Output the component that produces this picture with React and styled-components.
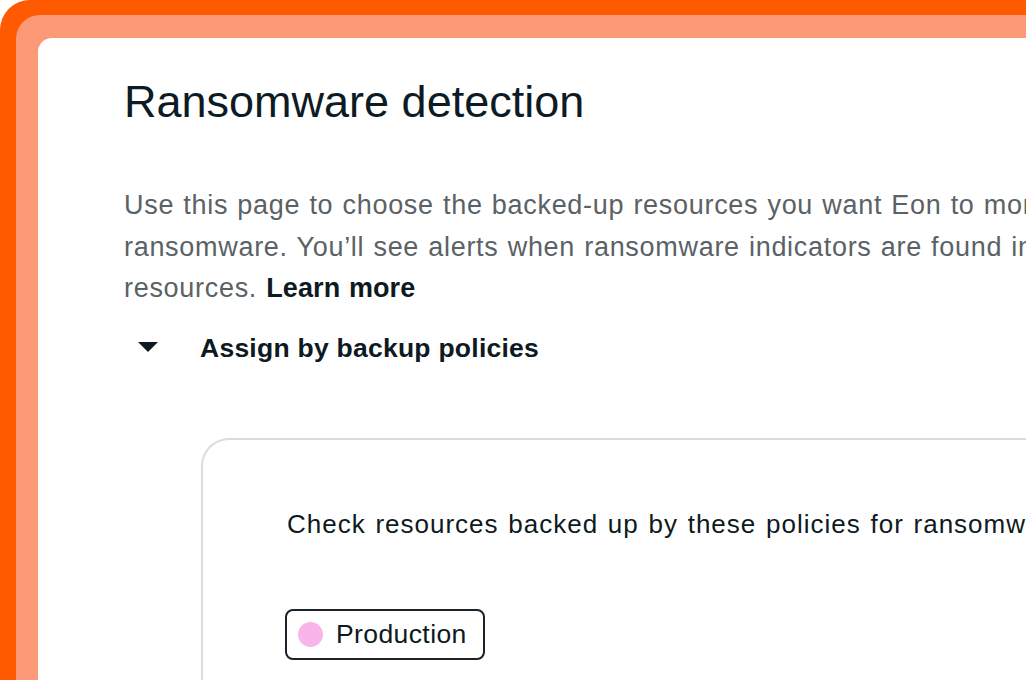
import React from "react";
import styled, { createGlobalStyle } from "styled-components";

const GlobalStyle = createGlobalStyle`
  html, body {
    margin: 0;
    padding: 0;
    background: #ffffff;
    overflow: hidden;
  }
  body {
    font-family: "Liberation Sans", Arial, sans-serif;
  }
`;

const Frame = styled.div`
  width: 1140px;
  height: 760px;
  background: #ff5a00;
  border-top-left-radius: 30px;
  padding: 15px 0 0 16px;
  box-sizing: border-box;
`;

const Band = styled.div`
  height: 100%;
  background: #fc9a77;
  border-top-left-radius: 24px;
  padding: 23px 0 0 22px;
  box-sizing: border-box;
`;

const Card = styled.div`
  height: 100%;
  background: #ffffff;
  border-top-left-radius: 14px;
  padding: 38px 0 0 86px;
  box-sizing: border-box;
`;

const Title = styled.h1`
  margin: 0;
  font-size: 45px;
  line-height: 52px;
  font-weight: 400;
  color: #0d1b24;
  white-space: nowrap;
`;

const Intro = styled.p`
  margin: 57px 0 0;
  font-size: 27px;
  line-height: 41.5px;
  letter-spacing: 0.7px;
  word-spacing: 1px;
  color: #5b6266;
  white-space: nowrap;
`;

const LearnMore = styled.a`
  color: #0e1a22;
  font-weight: 600;
  letter-spacing: 0.1px;
  text-decoration: none;
`;

const Toggle = styled.div`
  display: flex;
  align-items: center;
  gap: 42px;
  margin-top: 22px;
  padding-left: 14px;
  height: 32px;
`;

const Caret = styled.span`
  width: 0;
  height: 0;
  border-left: 10.5px solid transparent;
  border-right: 10.5px solid transparent;
  border-top: 10px solid #0e1a22;
  margin-top: -1px;
`;

const ToggleLabel = styled.span`
  font-size: 26.5px;
  line-height: 32px;
  font-weight: 600;
  letter-spacing: 0.25px;
  color: #0e1a22;
`;

const PolicyBox = styled.div`
  margin: 74px 0 0 77px;
  height: 400px;
  border: 2px solid #d6dddd;
  border-right: none;
  border-bottom: none;
  border-top-left-radius: 28px;
  padding: 69px 0 0 84px;
  box-sizing: border-box;
`;

const BoxText = styled.p`
  margin: 0;
  font-size: 26px;
  line-height: 30px;
  letter-spacing: 1px;
  word-spacing: 1.5px;
  color: #0e1a22;
  white-space: nowrap;
`;

const Chips = styled.div`
  display: flex;
  gap: 12px;
  margin: 70px 0 0 -2px;
`;

const Chip = styled.div`
  display: inline-flex;
  align-items: center;
  gap: 13px;
  height: 51px;
  box-sizing: border-box;
  padding: 0 16px 0 11px;
  border: 2px solid #1a2329;
  border-radius: 8px;
  font-size: 26.5px;
  letter-spacing: 0.4px;
  color: #0e1a22;
`;

const Dot = styled.span`
  width: 25px;
  height: 25px;
  border-radius: 50%;
  background: ${({ color }) => color};
`;

export default function App() {
  return (
    <>
      <GlobalStyle />
      <Frame>
        <Band>
          <Card>
            <Title>Ransomware detection</Title>
            <Intro>
              Use this page to choose the backed-up resources you want Eon to monitor for
              <br />
              ransomware. You’ll see alerts when ransomware indicators are found in these
              <br />
              resources. <LearnMore href="#">Learn more</LearnMore>
            </Intro>
            <Toggle>
              <Caret />
              <ToggleLabel>Assign by backup policies</ToggleLabel>
            </Toggle>
            <PolicyBox>
              <BoxText>Check resources backed up by these policies for ransomware</BoxText>
              <Chips>
                <Chip>
                  <Dot color="#f9b4e9" />
                  Production
                </Chip>
              </Chips>
            </PolicyBox>
          </Card>
        </Band>
      </Frame>
    </>
  );
}
